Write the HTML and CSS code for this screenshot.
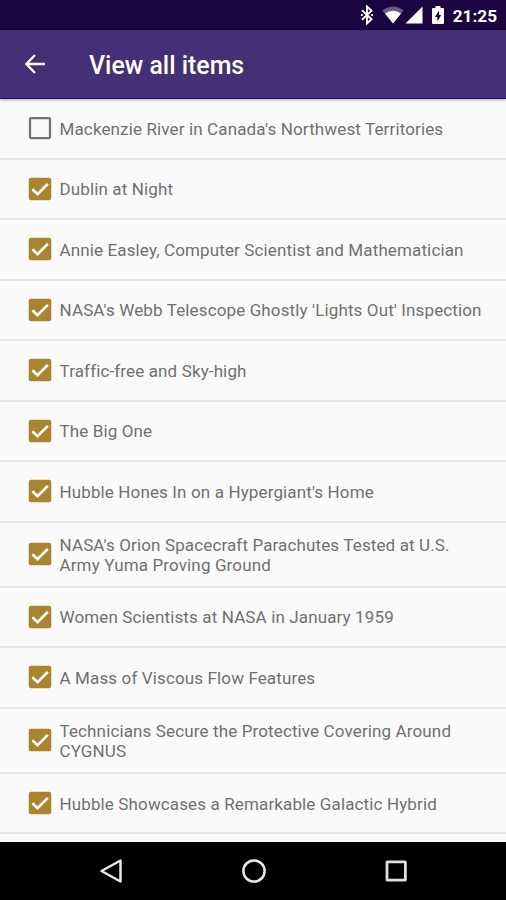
FILE: index.html
```html
<!DOCTYPE html>
<html lang="en">
<head>
<meta charset="utf-8">
<title>View all items</title>
<link rel="stylesheet" href="styles.css">
</head>
<body>
<svg class="defs" aria-hidden="true">
  <symbol id="on" viewBox="0 0 24 24"><rect x="3" y="3" width="18" height="18" rx="1.8" fill="#a98530"/><path d="M5.9 12.2L10 16.2L18.3 7.9" fill="none" stroke="#fff" stroke-width="2.1"/></symbol>
  <symbol id="off" viewBox="0 0 24 24"><rect x="4" y="4" width="16" height="16" rx="1" fill="none" stroke="#747474" stroke-width="1.8"/></symbol>
</svg>
<div class="screen">
  <div class="status">
    <svg class="bluetooth" viewBox="0 0 14 20"><path d="M2 5.2L11.5 14.3L7 18.5V1.5L11.5 5.7L2 14.8" fill="none" stroke="#fff" stroke-width="1.9"/><path d="M1 10h1.8M11.2 10H13" stroke="#fff" stroke-width="1.8"/></svg>
    <svg class="wifi" viewBox="0 0 22 18"><path d="M11 17.5L0.5 4.5Q11 -3.5 21.5 4.5Z" fill="#fff" opacity=".35"/><path d="M11 17.5L3 7.5Q11 2 19 7.5Z" fill="#fff"/></svg>
    <svg class="signal" viewBox="0 0 18 18"><path d="M0.5 17.5L17.5 0.5V17.5Z" fill="#fff"/></svg>
    <svg class="battery" viewBox="0 0 12 18"><path d="M3.5 0h5v2H11q1 0 1 1v14q0 1-1 1H1q-1 0-1-1V3q0-1 1-1h2.5Z" fill="#fff"/><path d="M7 4.5L3 11h2.4v4.5L9.2 9H7Z" fill="#1c0440"/></svg>
    <span class="clock">21:25</span>
  </div>
  <header class="toolbar">
    <svg class="back" viewBox="0 0 20 20"><path d="M10 1L1.4 10L10 19M1.8 10H20" fill="none" stroke="#fff" stroke-width="2.3"/></svg>
    <h1>View all items</h1>
  </header>
  <ul class="list">
    <li><svg class="box"><use href="#off"/></svg><span>Mackenzie River in Canada's Northwest Territories</span></li>
    <li><svg class="box"><use href="#on"/></svg><span>Dublin at Night</span></li>
    <li><svg class="box"><use href="#on"/></svg><span>Annie Easley, Computer Scientist and Mathematician</span></li>
    <li><svg class="box"><use href="#on"/></svg><span>NASA's Webb Telescope Ghostly 'Lights Out' Inspection</span></li>
    <li><svg class="box"><use href="#on"/></svg><span>Traffic-free and Sky-high</span></li>
    <li><svg class="box"><use href="#on"/></svg><span>The Big One</span></li>
    <li><svg class="box"><use href="#on"/></svg><span>Hubble Hones In on a Hypergiant's Home</span></li>
    <li class="tall"><svg class="box"><use href="#on"/></svg><span>NASA's Orion Spacecraft Parachutes Tested at U.S.<br>Army Yuma Proving Ground</span></li>
    <li><svg class="box"><use href="#on"/></svg><span>Women Scientists at NASA in January 1959</span></li>
    <li><svg class="box"><use href="#on"/></svg><span>A Mass of Viscous Flow Features</span></li>
    <li class="tall"><svg class="box"><use href="#on"/></svg><span>Technicians Secure the Protective Covering Around<br>CYGNUS</span></li>
    <li><svg class="box"><use href="#on"/></svg><span>Hubble Showcases a Remarkable Galactic Hybrid</span></li>
  </ul>
  <nav class="navbar">
    <svg viewBox="0 0 26 26"><path d="M22.5 2.5V23.5L3.5 13Z" fill="none" stroke="#e8e8e8" stroke-width="2.5" stroke-linejoin="round"/></svg>
    <svg viewBox="0 0 26 26"><circle cx="13" cy="13" r="10.6" fill="none" stroke="#e8e8e8" stroke-width="2.5"/></svg>
    <svg viewBox="0 0 26 26"><rect x="4" y="3.8" width="18.4" height="18.4" rx=".5" fill="none" stroke="#e0e0e0" stroke-width="2.8"/></svg>
  </nav>
</div>
</body>
</html>
```
FILE: styles.css
```css
* { box-sizing: border-box; }
body { margin: 0; font-family: Roboto, "Liberation Sans", sans-serif; }
.defs { display: none; }
.screen { width: 506px; height: 900px; display: flex; flex-direction: column; overflow: hidden; background: #fafafa; }
.status { flex: none; height: 30px; padding-right: 9px; display: flex; align-items: center; justify-content: flex-end; background: #1c0440; color: #fff; }
.bluetooth { width: 14px; height: 20px; margin-right: 8px; }
.wifi { width: 22px; height: 18px; margin-right: 1px; }
.signal { width: 18px; height: 18px; margin-right: 9px; }
.battery { width: 12px; height: 18px; margin-right: 9px; }
.clock { padding-top: 2px; font-size: 17.2px; font-weight: 700; line-height: 22px; }
.toolbar { flex: none; height: 69px; padding: 2px 0 0 25px; display: flex; align-items: center; background: #443074; border-bottom: 1px solid #24085c; box-shadow: 0 1px 3px rgba(0, 0, 0, .3); color: #fff; z-index: 1; }
.back { width: 20px; height: 20px; margin: 0 44px 2px 0; }
h1 { margin: 0; padding-top: 2px; font-size: 24.9px; font-weight: 500; line-height: 32px; }
.list { flex: 1; margin: 0; padding: 0; list-style: none; }
.list li { height: 60.5px; padding-left: 24.5px; display: flex; align-items: center; border-bottom: 2px solid #e5e5e5; color: #707070; font-size: 17px; letter-spacing: .13px; line-height: 20px; white-space: nowrap; }
.list .tall { height: 65.2px; }
.box { flex: none; width: 30px; height: 30px; margin-right: 5px; }
.list span { padding-top: 1px; }
.navbar { flex: none; height: 58px; padding-left: 1px; display: flex; align-items: center; justify-content: center; gap: 116.5px; background: #000; }
.navbar svg { width: 26px; height: 26px; }
```
